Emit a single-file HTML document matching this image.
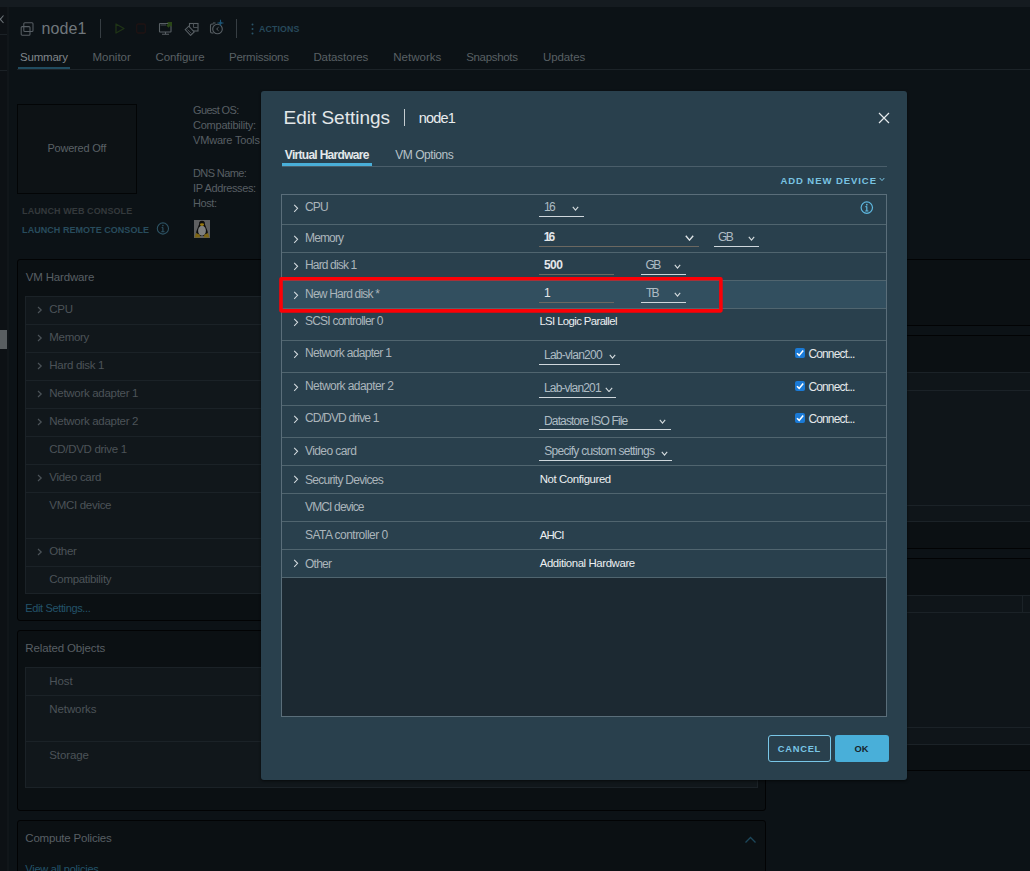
<!DOCTYPE html>
<html><head><meta charset="utf-8"><title>Edit Settings</title>
<style>
html,body{margin:0;padding:0;}
body{width:1030px;height:871px;overflow:hidden;position:relative;background:#0c1216;font-family:"Liberation Sans",sans-serif;}
.r{position:absolute;display:block;}
.t{position:absolute;white-space:pre;line-height:1;}
</style></head><body>
<div class="r" style="left:0px;top:0px;width:1030px;height:7px;background:#151b20"></div>
<div class="r" style="left:0px;top:7px;width:7px;height:864px;background:#0d1115"></div>
<div class="r" style="left:7px;top:7px;width:2px;height:864px;background:#11161a"></div>
<div class="r" style="left:0px;top:34px;width:7px;height:1px;background:#1b2126"></div>
<div class="r" style="left:0px;top:70px;width:7px;height:1px;background:#1b2126"></div>
<div class="r" style="left:0px;top:330px;width:7px;height:19px;background:#595e61"></div>
<svg class="r" style="left:0px;top:14px;" width="6" height="11" viewBox="0 0 6 11"><path d="M-3 1.5 L3.5 9 M3.5 1.5 L-3 9" stroke="#6a7176" stroke-width="1.1" fill="none"/></svg>
<svg class="r" style="left:20px;top:22px;" width="14" height="14" viewBox="0 0 14 14"><rect x="3.8" y="0.8" width="9.2" height="8.6" rx="1" fill="none" stroke="#575e63" stroke-width="1.05"/><rect x="1.2" y="4.6" width="8.8" height="8.6" rx="1" fill="none" stroke="#575e63" stroke-width="1.05"/></svg>
<div class="t" style="left:41.60px;top:21.26px;font-size:16px;color:#70777c;font-weight:normal;letter-spacing:0.075px;">node1</div>
<div class="r" style="left:100px;top:19px;width:1px;height:19px;background:#373e43"></div>
<svg class="r" style="left:115px;top:23px;" width="10" height="11" viewBox="0 0 10 11"><path d="M1 1 L9 5.5 L1 10 Z" fill="none" stroke="#1f3416" stroke-width="1.3" stroke-linejoin="round"/></svg>
<svg class="r" style="left:136px;top:23px;" width="10" height="11" viewBox="0 0 10 11"><rect x="0.7" y="1" width="8.6" height="9" rx="1.5" fill="none" stroke="#1f1313" stroke-width="1.3"/></svg>
<svg class="r" style="left:158px;top:20px;" width="16" height="16" viewBox="0 0 16 16"><rect x="1.5" y="3.5" width="11.5" height="8.5" rx="0.5" fill="none" stroke="#585f64" stroke-width="1.1"/><path d="M2.5 5 H8" stroke="#474d52" stroke-width="1"/><path d="M4 14.2 H11 M7.5 12 V14.2" stroke="#585f64" stroke-width="1.1"/><path d="M9 2 H14 V7 L12.6 5.6 L10.5 7.7 L8.3 5.5 L10.4 3.4 Z" fill="#2a4716"/></svg>
<svg class="r" style="left:184px;top:20px;" width="16" height="16" viewBox="0 0 16 16"><rect x="5.5" y="3.5" width="8.5" height="7.5" fill="none" stroke="#585f64" stroke-width="1.1"/><path d="M9.5 3.5 V7.5 H14" fill="none" stroke="#4a5055" stroke-width="1"/><path d="M1.2 9.6 L4.8 6.2 L10.2 12 L6.6 15.4 Z" fill="#0c1216" stroke="#585f64" stroke-width="1.1"/><path d="M3.5 9.5 L7.5 13.5" stroke="#474d52" stroke-width="0.9"/></svg>
<svg class="r" style="left:209px;top:19px;" width="16" height="17" viewBox="0 0 16 17"><path d="M4.5 5 H3 Q1.5 5 1.5 6.5 V12.5 Q1.5 14 3 14 H4.5" fill="none" stroke="#585f64" stroke-width="1.1"/><path d="M4 4 H6.5" stroke="#585f64" stroke-width="1.1"/><circle cx="8.5" cy="10" r="4.8" fill="none" stroke="#585f64" stroke-width="1.1"/><path d="M9.6 8.2 L7.6 10 L9.6 11.8" fill="none" stroke="#585f64" stroke-width="1"/><path d="M10.5 4 L11.5 2.7 L12.5 4 L11.5 5.3 Z M11.5 0.8 V6.8 M8.5 4 H14.5" stroke="#1c5577" stroke-width="1.1" fill="#1c5577"/></svg>
<div class="r" style="left:236px;top:19px;width:1px;height:19px;background:#373e43"></div>
<svg class="r" style="left:251px;top:23px;" width="3" height="12" viewBox="0 0 3 12"><circle cx="1.5" cy="1.5" r="1" fill="#2a5366"/><circle cx="1.5" cy="6" r="1" fill="#2a5366"/><circle cx="1.5" cy="10.5" r="1" fill="#2a5366"/></svg>
<div class="t" style="left:259.00px;top:25.15px;font-size:8.8px;color:#27495b;font-weight:bold;letter-spacing:0.117px;">ACTIONS</div>
<div class="t" style="left:20.10px;top:51.77px;font-size:11.5px;color:#80868b;font-weight:normal;letter-spacing:-0.233px;">Summary</div>
<div class="t" style="left:92.50px;top:51.77px;font-size:11.5px;color:#596064;font-weight:normal;letter-spacing:-0.008px;">Monitor</div>
<div class="t" style="left:155.60px;top:51.77px;font-size:11.5px;color:#596064;font-weight:normal;letter-spacing:-0.106px;">Configure</div>
<div class="t" style="left:229.00px;top:51.77px;font-size:11.5px;color:#596064;font-weight:normal;letter-spacing:-0.265px;">Permissions</div>
<div class="t" style="left:313.40px;top:51.77px;font-size:11.5px;color:#596064;font-weight:normal;letter-spacing:-0.078px;">Datastores</div>
<div class="t" style="left:393.20px;top:51.77px;font-size:11.5px;color:#596064;font-weight:normal;letter-spacing:0.021px;">Networks</div>
<div class="t" style="left:466.20px;top:51.77px;font-size:11.5px;color:#596064;font-weight:normal;letter-spacing:-0.319px;">Snapshots</div>
<div class="t" style="left:543.00px;top:51.77px;font-size:11.5px;color:#596064;font-weight:normal;letter-spacing:-0.108px;">Updates</div>
<div class="r" style="left:17px;top:69px;width:1013px;height:1px;background:#1c2328"></div>
<div class="r" style="left:18px;top:67px;width:52px;height:2px;background:#214c60"></div>
<div class="r" style="left:17px;top:104px;width:120px;height:90px;border:1px solid #030506;background:#0d1215;box-sizing:border-box"></div>
<div class="t" style="left:47.40px;top:143.19px;font-size:11px;color:#5a6166;font-weight:normal;letter-spacing:-0.200px;">Powered Off</div>
<div class="t" style="left:193.00px;top:105.19px;font-size:11px;color:#585f64;font-weight:normal;letter-spacing:-0.644px;">Guest OS:</div>
<div class="t" style="left:193.00px;top:120.19px;font-size:11px;color:#585f64;font-weight:normal;letter-spacing:-0.223px;">Compatibility:</div>
<div class="t" style="left:193.00px;top:135.19px;font-size:11px;color:#585f64;font-weight:normal;letter-spacing:-0.182px;">VMware Tools</div>
<div class="t" style="left:193.00px;top:168.19px;font-size:11px;color:#585f64;font-weight:normal;letter-spacing:-0.613px;">DNS Name:</div>
<div class="t" style="left:193.00px;top:183.19px;font-size:11px;color:#585f64;font-weight:normal;letter-spacing:-0.379px;">IP Addresses:</div>
<div class="t" style="left:193.00px;top:198.19px;font-size:11px;color:#585f64;font-weight:normal;letter-spacing:-0.412px;">Host:</div>
<div class="t" style="left:22.10px;top:206.58px;font-size:9px;color:#34393c;font-weight:bold;letter-spacing:0.094px;">LAUNCH WEB CONSOLE</div>
<div class="t" style="left:22.10px;top:225.68px;font-size:9px;color:#284c5d;font-weight:bold;letter-spacing:0.045px;">LAUNCH REMOTE CONSOLE</div>
<svg class="r" style="left:156px;top:222px;" width="14" height="14" viewBox="0 0 14 14"><circle cx="6.9" cy="6.5" r="5.6" fill="none" stroke="#2d5263" stroke-width="1.1"/><path d="M6.9 5.4 V9.6 M5.2 9.8 H8.6 M5.6 5.5 H6.9" stroke="#2d5263" stroke-width="1.1"/><circle cx="6.9" cy="3.6" r="0.8" fill="#2d5263"/></svg>
<svg class="r" style="left:194px;top:220px;" width="16" height="18" viewBox="0 0 16 18"><rect x="0" y="0" width="16" height="18" fill="#5f6061"/><path d="M5.2 4 Q4.5 1 8 0.8 Q11.5 1 10.8 4 L13.5 11 Q14.5 14 12 16 H4 Q1.5 14 2.5 11 Z" fill="#0c0c0c"/><ellipse cx="8" cy="10.8" rx="3.9" ry="5" fill="#7f8080"/><ellipse cx="8" cy="4.6" rx="2.1" ry="1.3" fill="#9a7b10"/><path d="M0.5 17.5 L2 13 L5.5 14.5 L6.5 17.5 Z M9.5 17.5 L10.5 14.5 L14 13 L15.5 17.5 Z" fill="#7d6514"/></svg>
<div class="r" style="left:17px;top:259px;width:749px;height:362px;border:1px solid #020304;border-radius:3px;background:#0b1013;box-sizing:border-box"></div>
<div class="t" style="left:25.80px;top:272.27px;font-size:11.5px;color:#585f64;font-weight:normal;letter-spacing:-0.180px;">VM Hardware</div>
<div class="r" style="left:25px;top:296px;width:733px;height:298px;border:1px solid #1b2227;background:#11171b;box-sizing:border-box"></div>
<div class="t" style="left:49.30px;top:304.27px;font-size:11.5px;color:#4c5358;font-weight:normal;letter-spacing:-0.300px;">CPU</div>
<svg class="r" style="left:37px;top:306px;" width="6" height="8" viewBox="0 0 6 8"><path d="M1 1 L4.2 4 L1 7" fill="none" stroke="#4c5358" stroke-width="1.2"/></svg>
<div class="r" style="left:26px;top:324px;width:731px;height:1px;background:#1b2227"></div>
<div class="t" style="left:49.30px;top:332.27px;font-size:11.5px;color:#4c5358;font-weight:normal;letter-spacing:-0.300px;">Memory</div>
<svg class="r" style="left:37px;top:334px;" width="6" height="8" viewBox="0 0 6 8"><path d="M1 1 L4.2 4 L1 7" fill="none" stroke="#4c5358" stroke-width="1.2"/></svg>
<div class="r" style="left:26px;top:352px;width:731px;height:1px;background:#1b2227"></div>
<div class="t" style="left:49.30px;top:360.27px;font-size:11.5px;color:#4c5358;font-weight:normal;letter-spacing:-0.300px;">Hard disk 1</div>
<svg class="r" style="left:37px;top:362px;" width="6" height="8" viewBox="0 0 6 8"><path d="M1 1 L4.2 4 L1 7" fill="none" stroke="#4c5358" stroke-width="1.2"/></svg>
<div class="r" style="left:26px;top:380px;width:731px;height:1px;background:#1b2227"></div>
<div class="t" style="left:49.30px;top:388.27px;font-size:11.5px;color:#4c5358;font-weight:normal;letter-spacing:-0.300px;">Network adapter 1</div>
<svg class="r" style="left:37px;top:390px;" width="6" height="8" viewBox="0 0 6 8"><path d="M1 1 L4.2 4 L1 7" fill="none" stroke="#4c5358" stroke-width="1.2"/></svg>
<div class="r" style="left:26px;top:408px;width:731px;height:1px;background:#1b2227"></div>
<div class="t" style="left:49.30px;top:416.27px;font-size:11.5px;color:#4c5358;font-weight:normal;letter-spacing:-0.300px;">Network adapter 2</div>
<svg class="r" style="left:37px;top:418px;" width="6" height="8" viewBox="0 0 6 8"><path d="M1 1 L4.2 4 L1 7" fill="none" stroke="#4c5358" stroke-width="1.2"/></svg>
<div class="r" style="left:26px;top:436px;width:731px;height:1px;background:#1b2227"></div>
<div class="t" style="left:49.30px;top:444.27px;font-size:11.5px;color:#4c5358;font-weight:normal;letter-spacing:-0.300px;">CD/DVD drive 1</div>
<div class="r" style="left:26px;top:464px;width:731px;height:1px;background:#1b2227"></div>
<div class="t" style="left:49.30px;top:472.27px;font-size:11.5px;color:#4c5358;font-weight:normal;letter-spacing:-0.300px;">Video card</div>
<svg class="r" style="left:37px;top:474px;" width="6" height="8" viewBox="0 0 6 8"><path d="M1 1 L4.2 4 L1 7" fill="none" stroke="#4c5358" stroke-width="1.2"/></svg>
<div class="r" style="left:26px;top:492px;width:731px;height:1px;background:#1b2227"></div>
<div class="t" style="left:49.30px;top:500.27px;font-size:11.5px;color:#4c5358;font-weight:normal;letter-spacing:-0.300px;">VMCI device</div>
<div class="r" style="left:26px;top:538px;width:731px;height:1px;background:#1b2227"></div>
<div class="t" style="left:49.30px;top:546.27px;font-size:11.5px;color:#4c5358;font-weight:normal;letter-spacing:-0.300px;">Other</div>
<svg class="r" style="left:37px;top:548px;" width="6" height="8" viewBox="0 0 6 8"><path d="M1 1 L4.2 4 L1 7" fill="none" stroke="#4c5358" stroke-width="1.2"/></svg>
<div class="r" style="left:26px;top:566px;width:731px;height:1px;background:#1b2227"></div>
<div class="t" style="left:49.30px;top:574.27px;font-size:11.5px;color:#4c5358;font-weight:normal;letter-spacing:-0.300px;">Compatibility</div>
<div class="t" style="left:25.30px;top:602.99px;font-size:11px;color:#23536a;font-weight:normal;letter-spacing:-0.363px;">Edit Settings...</div>
<div class="r" style="left:17px;top:630px;width:749px;height:181px;border:1px solid #020304;border-radius:3px;background:#0b1013;box-sizing:border-box"></div>
<div class="t" style="left:25.30px;top:643.27px;font-size:11.5px;color:#585f64;font-weight:normal;letter-spacing:-0.136px;">Related Objects</div>
<div class="r" style="left:25px;top:667px;width:733px;height:121px;border:1px solid #1b2227;background:#11171b;box-sizing:border-box"></div>
<div class="t" style="left:49.30px;top:676.27px;font-size:11.5px;color:#4c5358;font-weight:normal;letter-spacing:-0.100px;">Host</div>
<div class="r" style="left:26px;top:695px;width:731px;height:1px;background:#1b2227"></div>
<div class="t" style="left:49.30px;top:704.27px;font-size:11.5px;color:#4c5358;font-weight:normal;letter-spacing:-0.100px;">Networks</div>
<div class="r" style="left:26px;top:741px;width:731px;height:1px;background:#1b2227"></div>
<div class="t" style="left:49.30px;top:750.27px;font-size:11.5px;color:#4c5358;font-weight:normal;letter-spacing:-0.100px;">Storage</div>
<div class="r" style="left:17px;top:820px;width:749px;height:80px;border:1px solid #020304;border-radius:3px;background:#0b1013;box-sizing:border-box"></div>
<div class="t" style="left:25.30px;top:833.47px;font-size:11.5px;color:#585f64;font-weight:normal;letter-spacing:-0.200px;">Compute Policies</div>
<div class="t" style="left:25.30px;top:864.19px;font-size:11px;color:#23536a;font-weight:normal;letter-spacing:-0.247px;">View all policies</div>
<svg class="r" style="left:744px;top:836px;" width="13" height="8" viewBox="0 0 13 8"><path d="M1.5 6.5 L6.5 1.5 L11.5 6.5" fill="none" stroke="#1d475b" stroke-width="1.3"/></svg>
<div class="r" style="left:776px;top:259px;width:300px;height:67px;border:1px solid #020304;border-radius:3px;background:#0b1013;box-sizing:border-box"></div>
<div class="r" style="left:776px;top:335px;width:300px;height:214px;border:1px solid #020304;border-radius:3px;background:#0b1013;box-sizing:border-box"></div>
<div class="r" style="left:777px;top:372px;width:300px;height:150px;background:#0f1519"></div>
<div class="r" style="left:777px;top:372px;width:300px;height:1px;background:#1b2227"></div>
<div class="r" style="left:777px;top:390px;width:300px;height:1px;background:#1b2227"></div>
<div class="r" style="left:777px;top:505px;width:300px;height:1px;background:#1b2227"></div>
<div class="r" style="left:777px;top:521px;width:300px;height:1px;background:#1b2227"></div>
<div class="r" style="left:776px;top:558px;width:300px;height:213px;border:1px solid #020304;border-radius:3px;background:#0b1013;box-sizing:border-box"></div>
<div class="r" style="left:777px;top:595px;width:300px;height:150px;background:#0f1519"></div>
<div class="r" style="left:777px;top:595px;width:300px;height:1px;background:#1b2227"></div>
<div class="r" style="left:777px;top:612px;width:300px;height:1px;background:#1b2227"></div>
<div class="r" style="left:777px;top:727px;width:300px;height:1px;background:#1b2227"></div>
<div class="r" style="left:777px;top:744px;width:300px;height:1px;background:#1b2227"></div>
<div class="r" style="left:1022px;top:595px;width:1px;height:18px;background:#1b2227"></div>
<div class="r" style="left:261px;top:91px;width:646px;height:689px;background:#29404d;border-radius:3px;box-shadow:0 1px 3px rgba(0,0,0,0.6)"></div>
<div class="t" style="left:283.50px;top:108.32px;font-size:19px;color:#e3e7e9;font-weight:normal;letter-spacing:-0.013px;">Edit Settings</div>
<div class="r" style="left:404px;top:109px;width:1px;height:17px;background:#c5cdd1"></div>
<div class="t" style="left:418.70px;top:110.73px;font-size:14.5px;color:#e9edef;font-weight:normal;letter-spacing:-0.800px;">node1</div>
<svg class="r" style="left:878px;top:112px;" width="12" height="12" viewBox="0 0 12 12"><path d="M1 1 L11 11 M11 1 L1 11" stroke="#e6eaec" stroke-width="1.2"/></svg>
<div class="t" style="left:284.80px;top:148.84px;font-size:12px;color:#e4e8ea;font-weight:bold;letter-spacing:-0.703px;">Virtual Hardware</div>
<div class="t" style="left:395.20px;top:148.84px;font-size:12px;color:#b7c2c8;font-weight:normal;letter-spacing:-0.456px;">VM Options</div>
<div class="r" style="left:282px;top:166px;width:605px;height:1px;background:#4a5e6a"></div>
<div class="r" style="left:282px;top:163px;width:90px;height:3px;background:#49afd9"></div>
<div class="t" style="left:780.40px;top:176.26px;font-size:9.5px;color:#79c3e2;font-weight:bold;letter-spacing:0.938px;">ADD NEW DEVICE</div>
<svg class="r" style="left:879px;top:177px;" width="6" height="5" viewBox="0 0 6 5"><path d="M0.7 1 L3 3.6 L5.3 1" fill="none" stroke="#79c3e2" stroke-width="1"/></svg>
<div class="r" style="left:281px;top:194px;width:606px;height:523px;border:1px solid #5a6e7a;background:#1c2932;box-sizing:border-box"></div>
<div class="r" style="left:282px;top:195px;width:604px;height:382px;background:#29404d"></div>
<div class="r" style="left:282px;top:280px;width:604px;height:28px;background:#324f5f"></div>
<div class="r" style="left:282px;top:224px;width:604px;height:1px;background:#50656f"></div>
<div class="r" style="left:282px;top:252px;width:604px;height:1px;background:#50656f"></div>
<div class="r" style="left:282px;top:280px;width:604px;height:1px;background:#50656f"></div>
<div class="r" style="left:282px;top:308px;width:604px;height:1px;background:#50656f"></div>
<div class="r" style="left:282px;top:340px;width:604px;height:1px;background:#50656f"></div>
<div class="r" style="left:282px;top:372px;width:604px;height:1px;background:#50656f"></div>
<div class="r" style="left:282px;top:405px;width:604px;height:1px;background:#50656f"></div>
<div class="r" style="left:282px;top:437px;width:604px;height:1px;background:#50656f"></div>
<div class="r" style="left:282px;top:465px;width:604px;height:1px;background:#50656f"></div>
<div class="r" style="left:282px;top:493px;width:604px;height:1px;background:#50656f"></div>
<div class="r" style="left:282px;top:521px;width:604px;height:1px;background:#50656f"></div>
<div class="r" style="left:282px;top:549px;width:604px;height:1px;background:#50656f"></div>
<div class="r" style="left:282px;top:577px;width:604px;height:1px;background:#50656f"></div>
<div class="t" style="left:305.00px;top:201.14px;font-size:12px;color:#abb5bb;font-weight:normal;letter-spacing:-0.850px;">CPU</div>
<svg class="r" style="left:293px;top:204.15px;" width="6" height="9" viewBox="0 0 6 9"><path d="M1.2 0.8 L4.6 4.3 L1.2 7.8" fill="none" stroke="#d3dade" stroke-width="1.05"/></svg>
<div class="t" style="left:305.00px;top:231.64px;font-size:12px;color:#abb5bb;font-weight:normal;letter-spacing:-0.850px;">Memory</div>
<svg class="r" style="left:293px;top:234.65px;" width="6" height="9" viewBox="0 0 6 9"><path d="M1.2 0.8 L4.6 4.3 L1.2 7.8" fill="none" stroke="#d3dade" stroke-width="1.05"/></svg>
<div class="t" style="left:305.00px;top:259.24px;font-size:12px;color:#abb5bb;font-weight:normal;letter-spacing:-0.850px;">Hard disk 1</div>
<svg class="r" style="left:293px;top:262.25px;" width="6" height="9" viewBox="0 0 6 9"><path d="M1.2 0.8 L4.6 4.3 L1.2 7.8" fill="none" stroke="#d3dade" stroke-width="1.05"/></svg>
<div class="t" style="left:305.00px;top:287.54px;font-size:12px;color:#abb5bb;font-weight:normal;letter-spacing:-0.789px;">New Hard disk *</div>
<svg class="r" style="left:293px;top:290.55px;" width="6" height="9" viewBox="0 0 6 9"><path d="M1.2 0.8 L4.6 4.3 L1.2 7.8" fill="none" stroke="#d3dade" stroke-width="1.05"/></svg>
<div class="t" style="left:305.00px;top:315.14px;font-size:12px;color:#abb5bb;font-weight:normal;letter-spacing:-0.775px;">SCSI controller 0</div>
<svg class="r" style="left:293px;top:318.15000000000003px;" width="6" height="9" viewBox="0 0 6 9"><path d="M1.2 0.8 L4.6 4.3 L1.2 7.8" fill="none" stroke="#d3dade" stroke-width="1.05"/></svg>
<div class="t" style="left:305.00px;top:347.44px;font-size:12px;color:#abb5bb;font-weight:normal;letter-spacing:-0.697px;">Network adapter 1</div>
<svg class="r" style="left:293px;top:350.45000000000005px;" width="6" height="9" viewBox="0 0 6 9"><path d="M1.2 0.8 L4.6 4.3 L1.2 7.8" fill="none" stroke="#d3dade" stroke-width="1.05"/></svg>
<div class="t" style="left:305.00px;top:380.34px;font-size:12px;color:#abb5bb;font-weight:normal;letter-spacing:-0.572px;">Network adapter 2</div>
<svg class="r" style="left:293px;top:383.35px;" width="6" height="9" viewBox="0 0 6 9"><path d="M1.2 0.8 L4.6 4.3 L1.2 7.8" fill="none" stroke="#d3dade" stroke-width="1.05"/></svg>
<div class="t" style="left:305.00px;top:412.14px;font-size:12px;color:#abb5bb;font-weight:normal;letter-spacing:-0.850px;">CD/DVD drive 1</div>
<svg class="r" style="left:293px;top:415.15000000000003px;" width="6" height="9" viewBox="0 0 6 9"><path d="M1.2 0.8 L4.6 4.3 L1.2 7.8" fill="none" stroke="#d3dade" stroke-width="1.05"/></svg>
<div class="t" style="left:305.00px;top:445.24px;font-size:12px;color:#abb5bb;font-weight:normal;letter-spacing:-0.594px;">Video card</div>
<svg class="r" style="left:293px;top:446.79999999999995px;" width="6" height="9" viewBox="0 0 6 9"><path d="M1.2 0.8 L4.6 4.3 L1.2 7.8" fill="none" stroke="#d3dade" stroke-width="1.05"/></svg>
<div class="t" style="left:305.00px;top:473.54px;font-size:12px;color:#abb5bb;font-weight:normal;letter-spacing:-0.703px;">Security Devices</div>
<svg class="r" style="left:293px;top:475.09999999999997px;" width="6" height="9" viewBox="0 0 6 9"><path d="M1.2 0.8 L4.6 4.3 L1.2 7.8" fill="none" stroke="#d3dade" stroke-width="1.05"/></svg>
<div class="t" style="left:305.00px;top:501.34px;font-size:12px;color:#abb5bb;font-weight:normal;letter-spacing:-0.850px;">VMCI device</div>
<div class="t" style="left:305.00px;top:529.44px;font-size:12px;color:#abb5bb;font-weight:normal;letter-spacing:-0.531px;">SATA controller 0</div>
<div class="t" style="left:305.00px;top:557.54px;font-size:12px;color:#abb5bb;font-weight:normal;letter-spacing:-0.750px;">Other</div>
<svg class="r" style="left:293px;top:559.1px;" width="6" height="9" viewBox="0 0 6 9"><path d="M1.2 0.8 L4.6 4.3 L1.2 7.8" fill="none" stroke="#d3dade" stroke-width="1.05"/></svg>
<div class="t" style="left:543.90px;top:201.34px;font-size:12px;color:#aebcc4;font-weight:normal;letter-spacing:-1.600px;">16</div>
<svg class="r" style="left:572px;top:206px;" width="7" height="5" viewBox="0 0 7 5"><path d="M0.8 0.8 L3.5 4.1 L6.2 0.8" fill="none" stroke="#d5dcdf" stroke-width="1.1"/></svg>
<div class="r" style="left:539px;top:216px;width:45px;height:1px;background:#cfd7dc"></div>
<div class="t" style="left:543.70px;top:231.34px;font-size:12px;color:#e3e7ea;font-weight:bold;letter-spacing:-1.800px;">16</div>
<svg class="r" style="left:684.5px;top:235px;" width="9" height="6" viewBox="0 0 9 6"><path d="M0.8 0.8 L4.5 5.1 L8.2 0.8" fill="none" stroke="#dfe4e7" stroke-width="1.4"/></svg>
<div class="r" style="left:539px;top:246px;width:160px;height:1px;background:#6b6861"></div>
<div class="t" style="left:718.00px;top:231.14px;font-size:12px;color:#aebcc4;font-weight:normal;letter-spacing:-1.600px;">GB</div>
<svg class="r" style="left:747.5px;top:236px;" width="7" height="5" viewBox="0 0 7 5"><path d="M0.8 0.8 L3.5 4.1 L6.2 0.8" fill="none" stroke="#d5dcdf" stroke-width="1.1"/></svg>
<div class="r" style="left:714px;top:246px;width:45px;height:1px;background:#cfd7dc"></div>
<div class="t" style="left:543.90px;top:259.34px;font-size:12px;color:#e3e7ea;font-weight:bold;letter-spacing:-0.500px;">500</div>
<div class="r" style="left:539px;top:274px;width:75px;height:1px;background:#6b6861"></div>
<div class="t" style="left:645.60px;top:259.04px;font-size:12px;color:#aebcc4;font-weight:normal;letter-spacing:-1.700px;">GB</div>
<svg class="r" style="left:674.3px;top:264px;" width="7" height="5" viewBox="0 0 7 5"><path d="M0.8 0.8 L3.5 4.1 L6.2 0.8" fill="none" stroke="#d5dcdf" stroke-width="1.1"/></svg>
<div class="r" style="left:641px;top:274px;width:45px;height:1px;background:#cfd7dc"></div>
<div class="t" style="left:544.00px;top:287.14px;font-size:12px;color:#e3e7ea;font-weight:normal;letter-spacing:0.000px;">1</div>
<div class="r" style="left:539px;top:302px;width:75px;height:1px;background:#6b6861"></div>
<div class="t" style="left:646.00px;top:287.14px;font-size:12px;color:#aebcc4;font-weight:normal;letter-spacing:-1.800px;">TB</div>
<svg class="r" style="left:674.3px;top:292px;" width="7" height="5" viewBox="0 0 7 5"><path d="M0.8 0.8 L3.5 4.1 L6.2 0.8" fill="none" stroke="#d5dcdf" stroke-width="1.1"/></svg>
<div class="r" style="left:641px;top:302px;width:45px;height:1px;background:#cfd7dc"></div>
<div class="t" style="left:539.40px;top:315.95px;font-size:11.4px;color:#eceff1;font-weight:normal;letter-spacing:-0.624px;">LSI Logic Parallel</div>
<div class="t" style="left:544.00px;top:349.44px;font-size:12px;color:#aebcc4;font-weight:normal;letter-spacing:-0.745px;">Lab-vlan200</div>
<svg class="r" style="left:608.5px;top:354px;" width="7" height="5" viewBox="0 0 7 5"><path d="M0.8 0.8 L3.5 4.1 L6.2 0.8" fill="none" stroke="#d5dcdf" stroke-width="1.1"/></svg>
<div class="r" style="left:539px;top:364px;width:81px;height:1px;background:#cfd7dc"></div>
<div class="t" style="left:544.00px;top:382.44px;font-size:12px;color:#aebcc4;font-weight:normal;letter-spacing:-0.850px;">Lab-vlan201</div>
<svg class="r" style="left:605px;top:386.5px;" width="8" height="5.5" viewBox="0 0 8 5.5"><path d="M0.8 0.8 L4.0 4.6 L7.2 0.8" fill="none" stroke="#d5dcdf" stroke-width="1.1"/></svg>
<div class="r" style="left:539px;top:397px;width:77px;height:1px;background:#cfd7dc"></div>
<div class="t" style="left:544.00px;top:414.64px;font-size:12px;color:#aebcc4;font-weight:normal;letter-spacing:-0.850px;">Datastore ISO File</div>
<svg class="r" style="left:659.3px;top:418.5px;" width="7" height="5" viewBox="0 0 7 5"><path d="M0.8 0.8 L3.5 4.1 L6.2 0.8" fill="none" stroke="#d5dcdf" stroke-width="1.1"/></svg>
<div class="r" style="left:539px;top:429px;width:132px;height:1px;background:#cfd7dc"></div>
<div class="t" style="left:544.20px;top:445.14px;font-size:12px;color:#aebcc4;font-weight:normal;letter-spacing:-0.698px;">Specify custom settings</div>
<svg class="r" style="left:660.5px;top:450.5px;" width="7" height="5" viewBox="0 0 7 5"><path d="M0.8 0.8 L3.5 4.1 L6.2 0.8" fill="none" stroke="#d5dcdf" stroke-width="1.1"/></svg>
<div class="r" style="left:539px;top:460px;width:133px;height:1px;background:#cfd7dc"></div>
<div class="t" style="left:539.70px;top:473.75px;font-size:11.4px;color:#eceff1;font-weight:normal;letter-spacing:-0.392px;">Not Configured</div>
<div class="t" style="left:539.70px;top:529.65px;font-size:11.4px;color:#eceff1;font-weight:normal;letter-spacing:-0.850px;">AHCI</div>
<div class="t" style="left:539.70px;top:557.95px;font-size:11.4px;color:#eceff1;font-weight:normal;letter-spacing:-0.397px;">Additional Hardware</div>
<div class="r" style="left:795px;top:348px;width:10px;height:10px;background:#1a7ad6;border-radius:2px"></div>
<svg class="r" style="left:795px;top:348px;" width="10" height="10" viewBox="0 0 10 10"><path d="M2 5.2 L4.2 7.4 L8.2 2.6" fill="none" stroke="#fff" stroke-width="1.6"/></svg>
<div class="t" style="left:808.40px;top:348.34px;font-size:12px;color:#e4e8ea;font-weight:normal;letter-spacing:-0.850px;">Connect...</div>
<div class="r" style="left:795px;top:380.5px;width:10px;height:10px;background:#1a7ad6;border-radius:2px"></div>
<svg class="r" style="left:795px;top:380.5px;" width="10" height="10" viewBox="0 0 10 10"><path d="M2 5.2 L4.2 7.4 L8.2 2.6" fill="none" stroke="#fff" stroke-width="1.6"/></svg>
<div class="t" style="left:808.40px;top:381.34px;font-size:12px;color:#e4e8ea;font-weight:normal;letter-spacing:-0.850px;">Connect...</div>
<div class="r" style="left:795px;top:413px;width:10px;height:10px;background:#1a7ad6;border-radius:2px"></div>
<svg class="r" style="left:795px;top:413px;" width="10" height="10" viewBox="0 0 10 10"><path d="M2 5.2 L4.2 7.4 L8.2 2.6" fill="none" stroke="#fff" stroke-width="1.6"/></svg>
<div class="t" style="left:808.40px;top:413.14px;font-size:12px;color:#e4e8ea;font-weight:normal;letter-spacing:-0.850px;">Connect...</div>
<svg class="r" style="left:860px;top:201px;" width="14" height="14" viewBox="0 0 14 14"><circle cx="6.8" cy="6.6" r="5.7" fill="none" stroke="#5eb7df" stroke-width="1.2"/><path d="M6.8 5.6 V10 M5.2 10 H8.4 M5.4 5.6 H6.8" stroke="#5eb7df" stroke-width="1.2"/><circle cx="6.8" cy="3.7" r="0.85" fill="#5eb7df"/></svg>
<svg class="r" style="left:270px;top:270px;" width="460" height="50" viewBox="0 0 460 50"><rect x="11.0" y="8.8" width="439.9" height="32.1" rx="0.3" fill="none" stroke="#fc0006" stroke-width="3.6"/></svg>
<div class="r" style="left:768px;top:735px;width:63px;height:27px;border:1px solid #79c6e6;border-radius:3px;box-sizing:border-box"></div>
<div class="t" style="left:777.80px;top:744.93px;font-size:9.3px;color:#79c6e6;font-weight:bold;letter-spacing:0.750px;">CANCEL</div>
<div class="r" style="left:835px;top:735px;width:54px;height:27px;background:#49afd9;border-radius:3px"></div>
<div class="t" style="left:854.60px;top:744.93px;font-size:9.3px;color:#17242b;font-weight:bold;letter-spacing:-0.050px;">OK</div>
</body></html>
